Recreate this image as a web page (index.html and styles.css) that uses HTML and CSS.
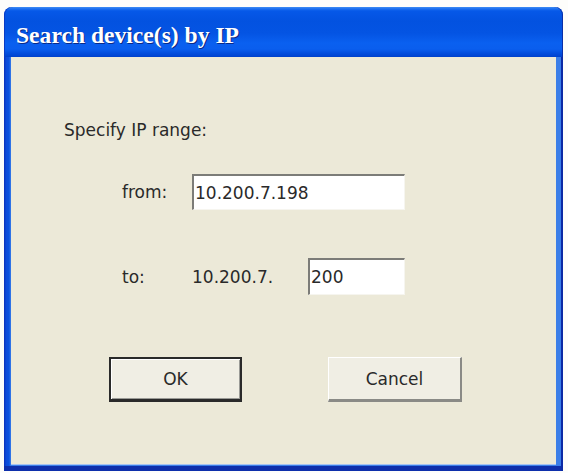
FILE: index.html
```html
<!DOCTYPE html>
<html>
<head>
<meta charset="utf-8">
<link rel="stylesheet" href="styles.css">
</head>
<body>
<div class="window">
  <div class="titlebar"><span class="title">Search device(s) by IP</span></div>
  <div class="frame">
    <div class="client">
      <p class="heading">Specify IP range:</p>
      <div class="fields">
        <span class="label">from:</span>
        <div class="field"><input class="input wide" type="text" value="10.200.7.198"></div>
        <span class="label">to:</span>
        <div class="field"><span class="prefix">10.200.7.</span><input class="input narrow" type="text" value="200"></div>
      </div>
      <div class="buttons">
        <button class="btn default">OK</button>
        <button class="btn">Cancel</button>
      </div>
    </div>
  </div>
</div>
</body>
</html>
```
FILE: styles.css
```css
html, body {
  margin: 0;
  padding: 0;
  background: #fdfdfb;
  font-family: "DejaVu Sans", sans-serif;
}
.window {
  margin: 7px 0 0 4px;
  width: 559px;
  height: 464px;
  display: flex;
  flex-direction: column;
}
.titlebar {
  height: 50px;
  box-sizing: border-box;
  padding: 6px 0 0 12px;
  display: flex;
  align-items: center;
  border-radius: 8px 8px 0 0;
  background: linear-gradient(to bottom,
    #3f8cf3 0px, #1a6ef0 2px, #0658e8 4px, #0352e0 14px,
    #0454e3 26px, #0a60f0 36px, #0a5eee 42px, #034ede 46px,
    #0044d2 49px, #0040c8 50px);
  box-shadow: inset 1px 0 0 #0a3bc4, inset -1px 0 0 #0a2fa8;
}
.title {
  font-family: "Liberation Serif", serif;
  font-weight: bold;
  font-size: 23.6px;
  line-height: 25px;
  color: #ffffff;
  text-shadow: 1px 1px 0 #0b2a86;
}
.frame {
  flex: 1;
  display: flex;
  padding: 0 7px 7px 7px;
  background: linear-gradient(to right, #0a2fb8 0px, #0c4ad8 2px, #0a52e0 5px, #3a7ee8 7px);
  box-shadow: inset -2px 0 0 #0b2aa6, inset 0 -5px 0 #0e2fab;
}
.client {
  flex: 1;
  background: #ece9d8;
  box-shadow: 0 1px 0 #a8c4f2;
  color: #2a2a2a;
  font-size: 17px;
}
.heading {
  margin: 62px 0 0 53px;
  line-height: 22px;
}
.fields {
  margin: 33px 0 0 111px;
  display: grid;
  grid-template-columns: 70px auto;
  row-gap: 48px;
  align-items: center;
}
.field {
  display: flex;
  align-items: center;
}
.prefix {
  width: 116px;
}
.input {
  box-sizing: border-box;
  margin: 0;
  padding: 0 0 0 1px;
  font-family: "DejaVu Sans", sans-serif;
  font-size: 17px;
  color: #2a2a2a;
  background: #ffffff;
  border-style: solid;
  border-width: 2px 1px 1px 2px;
  border-color: #7c7c78 #f6f5ef #f6f5ef #7c7c78;
  outline: none;
}
.wide {
  width: 213px;
  height: 36px;
}
.narrow {
  width: 97px;
  height: 37px;
}
.buttons {
  margin: 62px 0 0 98px;
  display: flex;
  gap: 86px;
}
.btn {
  box-sizing: border-box;
  height: 45px;
  width: 134px;
  margin: 0;
  padding: 0;
  font-family: "DejaVu Sans", sans-serif;
  font-size: 17px;
  color: #2a2a2a;
  background: #f0eee4;
  border-style: solid;
  border-width: 1px 2px 3px 1px;
  border-color: #ffffff #8a8a86 #8a8a86 #ffffff;
}
.btn.default {
  width: 133px;
  border-width: 2px 2px 3px 2px;
  border-color: #2a2a2a;
  box-shadow: inset 1px 1px 0 #ffffff, inset -1px -1px 0 #9a9a96;
}
```
